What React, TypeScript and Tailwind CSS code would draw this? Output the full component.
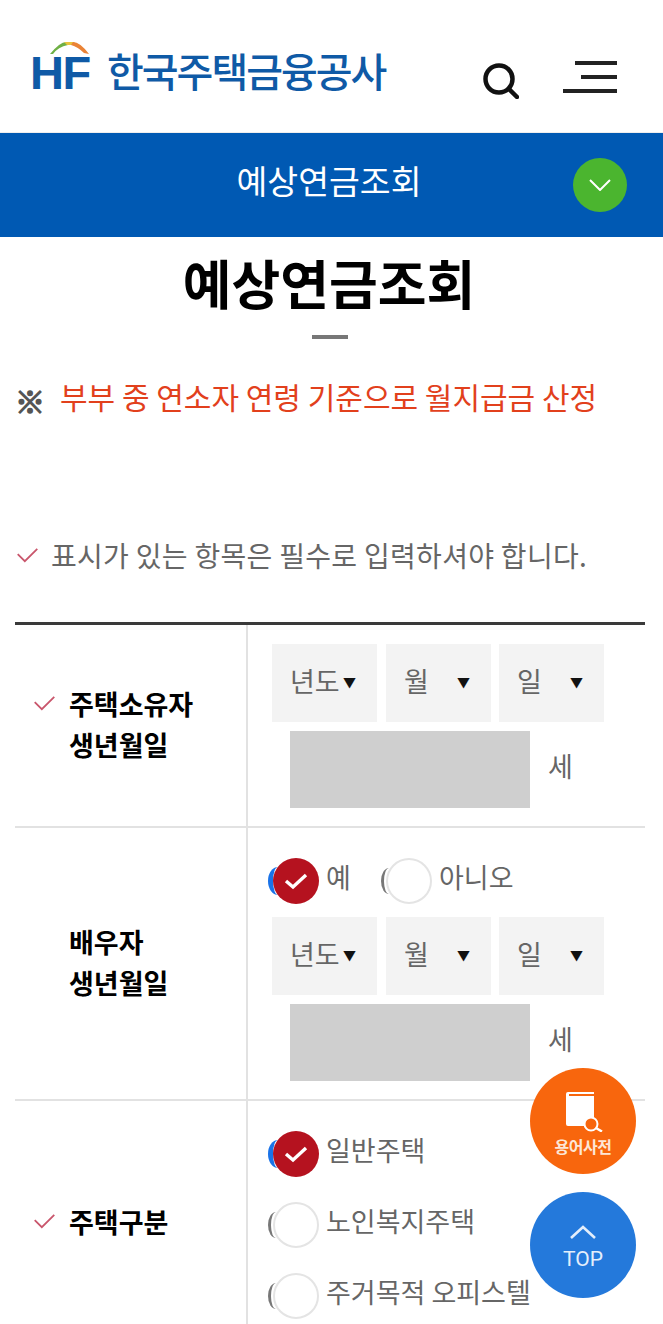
import React from 'react';

const font = { fontFamily: '"Noto Sans CJK KR", "Noto Sans", sans-serif' };

const CheckMark = ({ className }: { className: string }) => (
  <svg viewBox="0 0 24 18" className={className} fill="none" stroke="#c9566c" strokeWidth="2">
    <path d="M1 8l8 8L23 2" />
  </svg>
);

const Radio = ({ checked }: { checked?: boolean }) => (
  <span className="relative flex h-[46px] w-[51px] shrink-0 items-center justify-end">
    {checked ? (
      <span className="absolute left-0 top-[9px] h-[28px] w-[20px] rounded-[50%] border-l-[5px] border-[#1a73e8]" />
    ) : (
      <span className="absolute left-0 top-[10px] h-[26px] w-[16px] rounded-[50%] border-l-[3px] border-[#777]" />
    )}
    {checked ? (
      <span className="relative flex h-[46px] w-[46px] items-center justify-center rounded-full bg-[#b5121f]">
        <svg viewBox="0 0 24 18" className="h-[18px] w-[24px]" fill="none" stroke="#fff" strokeWidth="3.4">
          <path d="M2 9l7 6L22 3" />
        </svg>
      </span>
    ) : (
      <span className="relative h-[46px] w-[46px] rounded-full border-2 border-[#e4e4e4] bg-white" />
    )}
  </span>
);

const Select = ({ label }: { label: string }) => (
  <div className="flex h-[78px] w-[105px] items-center bg-[#f3f3f3] pb-[4px] pl-[18px] text-[27px] text-[#666]">
    <span className="w-[53px] shrink-0">{label}</span>
    <span className="text-[13px] leading-none text-[#111]">▼</span>
  </div>
);

const DateFields = () => (
  <>
    <div className="flex">
      <Select label="년도" />
      <div className="ml-[9px]">
        <Select label="월" />
      </div>
      <div className="ml-[8px]">
        <Select label="일" />
      </div>
    </div>
    <div className="mt-[9px] flex items-center pl-[18px]">
      <div className="h-[77px] w-[240px] bg-[#cfcfcf]" />
      <span className="ml-[18px] pb-[6px] text-[27px] text-[#666]">세</span>
    </div>
  </>
);

const App = () => {
  return (
    <div className="relative h-[1324px] w-[663px] overflow-hidden bg-white" style={font}>
      <header className="flex h-[133px] justify-between border-b border-[#eeeeee] pl-[32px] pr-[46px]">
        <div className="flex items-center pt-[2px]">
          <div className="relative h-[52px] w-[60px]">
            <svg viewBox="0 0 40 14" className="absolute left-[18px] top-0 h-[14px] w-[40px]">
              <path d="M0 13 Q10 1 16 1 L18 4 Q8 6 3 13z" fill="#6fb045" />
              <path d="M14 1 H25 L22 4 H17z" fill="#e8c43c" />
              <path d="M23 1 Q30 1 39 13 L34 12 Q28 6 21 4z" fill="#ea8336" />
            </svg>
            <span
              className="absolute bottom-[-3px] left-[-2px] text-[47px] font-bold leading-[47px] tracking-[-1.5px] text-[#0f5aa6]"
              style={{ fontFamily: '"Liberation Sans", sans-serif' }}
            >
              HF
            </span>
          </div>
          <span className="ml-[15px] pt-[6px] text-[40px] font-medium leading-none tracking-[-2px] text-[#0f5aa6]">
            한국주택금융공사
          </span>
        </div>
        <div className="flex items-start gap-[44px]">
          <svg viewBox="0 0 36 36" className="mt-[63px] h-[36px] w-[36px]" fill="none" stroke="#111" strokeWidth="4.5">
            <circle cx="16" cy="16" r="13.5" />
            <path d="M26 26l8 8" strokeLinecap="round" />
          </svg>
          <div className="mt-[61px] flex w-[54px] flex-col items-end gap-[10px]">
            <span className="h-[4px] w-[42px] bg-[#222]" />
            <span className="h-[4px] w-[36px] bg-[#222]" />
            <span className="h-[4px] w-[54px] bg-[#222]" />
          </div>
        </div>
      </header>

      <div className="relative flex h-[104px] items-center justify-center bg-[#0059b3] pr-[5px]">
        <span className="pb-[10px] text-[33.5px] text-white">예상연금조회</span>
        <span className="absolute right-[36px] top-[25px] flex h-[54px] w-[54px] items-center justify-center rounded-full bg-[#4bb52f]">
          <svg viewBox="0 0 22 12" className="h-[12px] w-[22px]" fill="none" stroke="#fff" strokeWidth="2">
            <path d="M1 1l10 10L21 1" />
          </svg>
        </span>
      </div>

      <h1 className="mt-[11px] pr-[5px] text-center text-[53px] font-bold leading-[68px] text-black">예상연금조회</h1>
      <div className="ml-[312px] mt-[19px] h-[4px] w-[36px] bg-[#777]" />

      <div className="mt-[32px] flex items-start pl-[15px]">
        <span className="h-[50px] w-[45px] pt-[4px] text-[30px] font-bold leading-[50px] text-[#555] [-webkit-text-stroke:1.5px_#555]">
          ※
        </span>
        <span className="text-[30px] leading-[50px] text-[#e2401c]">부부 중 연소자 연령 기준으로 월지급금 산정</span>
      </div>

      <div className="mt-[114px] flex items-center pl-[16px]">
        <CheckMark className="h-[16px] w-[23px]" />
        <span className="ml-[12px] text-[28px] leading-[40px] tracking-[0.3px] text-[#666]">
          표시가 있는 항목은 필수로 입력하셔야 합니다.
        </span>
      </div>

      <div className="ml-[15px] mr-[18px] mt-[47px] border-t-[3px] border-[#3a3a3a]">
        <div className="flex h-[203px] border-b-2 border-[#e2e2e2]">
          <div className="flex w-[233px] items-center border-r-2 border-[#e2e2e2] pb-[4px] pl-[18px]">
            <CheckMark className="mb-[42px] h-[16px] w-[23px]" />
            <span className="ml-[13px] text-[27px] font-bold leading-[41px] text-black">
              주택소유자
              <br />
              생년월일
            </span>
          </div>
          <div className="pl-[24px] pt-[19px]">
            <DateFields />
          </div>
        </div>

        <div className="flex h-[273px] border-b-2 border-[#e2e2e2]">
          <div className="flex w-[233px] items-center border-r-2 border-[#e2e2e2] pb-[4px] pl-[54px]">
            <span className="text-[27px] font-bold leading-[41px] text-black">
              배우자
              <br />
              생년월일
            </span>
          </div>
          <div className="pl-[24px] pt-[30px]">
            <div className="mb-[13px] ml-[-4px] flex h-[46px] items-center text-[27px] text-[#666]">
              <Radio checked />
              <span className="ml-[7px] w-[55px] pb-[8px]">예</span>
              <Radio />
              <span className="ml-[7px] pb-[8px]">아니오</span>
            </div>
            <DateFields />
          </div>
        </div>

        <div className="flex h-[240px]">
          <div className="flex w-[233px] items-center border-r-2 border-[#e2e2e2] pl-[18px]">
            <CheckMark className="h-[16px] w-[23px]" />
            <span className="ml-[13px] text-[27px] font-bold leading-[41px] text-black">주택구분</span>
          </div>
          <div className="ml-[-4px] flex flex-col gap-[25px] pl-[24px] pt-[30px] text-[27px] text-[#666]">
            {[
              { label: '일반주택', checked: true },
              { label: '노인복지주택', checked: false },
              { label: '주거목적 오피스텔', checked: false },
            ].map((item) => (
              <div key={item.label} className="flex h-[46px] items-center">
                <Radio checked={item.checked} />
                <span className="ml-[7px] pb-[8px]">{item.label}</span>
              </div>
            ))}
          </div>
        </div>
      </div>

      <div className="absolute left-[530px] top-[1068px] flex h-[106px] w-[106px] flex-col items-center rounded-full bg-[#f8660d] pt-[24px]">
        <svg viewBox="0 0 40 40" className="h-[40px] w-[40px]" fill="none">
          <path d="M5 0h26v2H6v2h25v30H5a2 2 0 0 1-2-2V2a2 2 0 0 1 2-2z" fill="#fff" />
          <circle cx="28" cy="32" r="6.5" fill="#f8660d" stroke="#fff" strokeWidth="2" />
          <path d="M33 36l6 3.5" stroke="#fff" strokeWidth="2.5" />
        </svg>
        <span className="mt-[3px] text-[16px] font-bold leading-[22px] tracking-[-0.5px] text-[#fde6d6]">용어사전</span>
      </div>

      <div className="absolute left-[530px] top-[1192px] flex h-[106px] w-[106px] flex-col items-center rounded-full bg-[#2479db] pt-[33px]">
        <svg viewBox="0 0 26 14" className="h-[14px] w-[26px]" fill="none" stroke="#e3eefb" strokeWidth="2.6">
          <path d="M1 13L13 2l12 11" />
        </svg>
        <span className="mt-[7px] text-[21px] leading-[26px] text-[#e3eefb]" style={{ fontFamily: 'Roboto, sans-serif' }}>
          TOP
        </span>
      </div>
    </div>
  );
};

export default App;
